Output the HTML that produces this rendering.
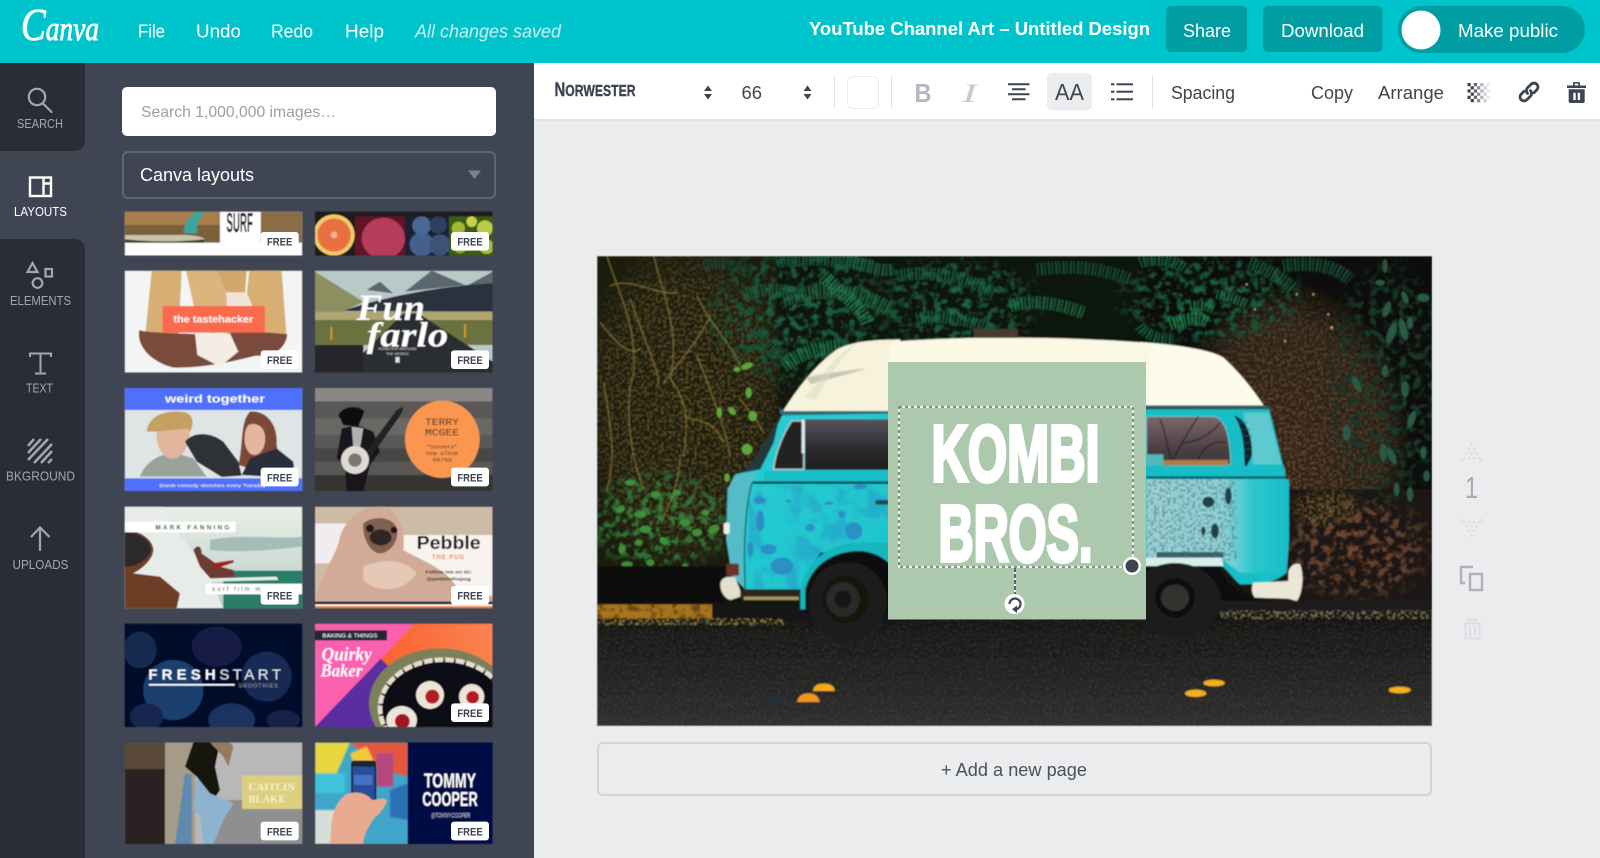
<!DOCTYPE html>
<html><head><meta charset="utf-8"><title>Canva</title>
<style>
html,body{margin:0;padding:0;width:1600px;height:858px;overflow:hidden;background:#ebecee}
svg{display:block}
text{font-family:"Liberation Sans",sans-serif}
.ser{font-family:"Liberation Serif",serif}
.mono{font-family:"Liberation Mono",monospace}
</style></head><body>
<svg width="1600" height="858" viewBox="0 0 1600 858" xmlns="http://www.w3.org/2000/svg">
<defs>
<filter id="m1" x="0" y="0" width="1" height="1" color-interpolation-filters="sRGB"><feTurbulence type="fractalNoise" baseFrequency=".014" numOctaves="4" seed="3"/><feColorMatrix type="matrix" values="0 0 0 0 0 0 0 0 0 0 0 0 0 0 0 6 0 0 0 -2.9" result="a"/><feComposite in="SourceGraphic" in2="a" operator="in"/></filter>
<filter id="m2" x="0" y="0" width="1" height="1" color-interpolation-filters="sRGB"><feTurbulence type="fractalNoise" baseFrequency=".045" numOctaves="3" seed="8"/><feColorMatrix type="matrix" values="0 0 0 0 0 0 0 0 0 0 0 0 0 0 0 5 0 0 0 -2.4" result="a"/><feComposite in="SourceGraphic" in2="a" operator="in"/></filter>
<filter id="m3" x="0" y="0" width="1" height="1" color-interpolation-filters="sRGB"><feTurbulence type="fractalNoise" baseFrequency=".5" numOctaves="2" seed="5"/><feColorMatrix type="matrix" values="0 0 0 0 0 0 0 0 0 0 0 0 0 0 0 6 0 0 0 -3.4" result="a"/><feComposite in="SourceGraphic" in2="a" operator="in"/></filter>
<filter id="m4" x="0" y="0" width="1" height="1" color-interpolation-filters="sRGB"><feTurbulence type="fractalNoise" baseFrequency=".12" numOctaves="2" seed="11"/><feColorMatrix type="matrix" values="0 0 0 0 0 0 0 0 0 0 0 0 0 0 0 7 0 0 0 -3.4" result="a"/><feComposite in="SourceGraphic" in2="a" operator="in"/></filter>
<filter id="b1"><feGaussianBlur stdDeviation="2.5"/></filter>
<filter id="b3"><feGaussianBlur stdDeviation="1.3"/></filter>
<filter id="bp" x="0" y="0" width="1" height="1"><feGaussianBlur stdDeviation=".7"/></filter>
<linearGradient id="sky" x1="0" y1="0" x2="0" y2="1"><stop offset="0" stop-color="#e8eee6"/><stop offset="1" stop-color="#b8cfc6"/></linearGradient>
<linearGradient id="oran" x1="0" y1="0" x2="1" y2="0"><stop offset="0" stop-color="#f9602e"/><stop offset="1" stop-color="#fb8250"/></linearGradient>
<linearGradient id="road" x1="0" y1="0" x2="0" y2="1"><stop offset="0" stop-color="#171716"/><stop offset=".35" stop-color="#1f1f1e"/><stop offset="1" stop-color="#302f2e"/></linearGradient>
<linearGradient id="palebody" x1="0" y1="0" x2="1" y2="0"><stop offset="0" stop-color="#9fd3d6"/><stop offset=".55" stop-color="#8fd2d6"/><stop offset=".75" stop-color="#2cc6cd"/><stop offset="1" stop-color="#16bec7"/></linearGradient>
<linearGradient id="leftbody" x1="0" y1="0" x2="1" y2="1"><stop offset="0" stop-color="#2accd2"/><stop offset="1" stop-color="#1cc4cc"/></linearGradient>
<linearGradient id="winL" x1="0" y1="0" x2="0" y2="1"><stop offset="0" stop-color="#55535a"/><stop offset=".6" stop-color="#2b2a2c"/><stop offset="1" stop-color="#1f1f20"/></linearGradient>
<linearGradient id="winR" x1="0" y1="0" x2="0" y2="1"><stop offset="0" stop-color="#7a6668"/><stop offset=".7" stop-color="#4a3e42"/><stop offset="1" stop-color="#3c3a3c"/></linearGradient>
<radialGradient id="gOl"><stop offset="0" stop-color="#93793a"/><stop offset=".7" stop-color="#7d6932"/><stop offset="1" stop-color="#7d6932" stop-opacity="0"/></radialGradient>
<radialGradient id="gGr"><stop offset="0" stop-color="#1c6442"/><stop offset=".7" stop-color="#175437"/><stop offset="1" stop-color="#175437" stop-opacity="0"/></radialGradient>
<radialGradient id="gLg"><stop offset="0" stop-color="#37803a"/><stop offset=".7" stop-color="#2e6e34"/><stop offset="1" stop-color="#2e6e34" stop-opacity="0"/></radialGradient>
<radialGradient id="gBr"><stop offset="0" stop-color="#6e4d35"/><stop offset=".75" stop-color="#59402c"/><stop offset="1" stop-color="#59402c" stop-opacity="0"/></radialGradient>
<radialGradient id="gDk"><stop offset="0" stop-color="#1c3f2e"/><stop offset=".7" stop-color="#173726"/><stop offset="1" stop-color="#173726" stop-opacity="0"/></radialGradient>
<radialGradient id="gRk"><stop offset="0" stop-color="#7a4a30"/><stop offset=".7" stop-color="#5e4030"/><stop offset="1" stop-color="#5e4030" stop-opacity="0"/></radialGradient>
<clipPath id="cv"><rect x="597" y="256" width="835" height="470"/></clipPath>
<clipPath id="t0l"><rect x="44" y="20" width="533" height="132"/></clipPath>
<clipPath id="t0r"><rect x="615" y="20" width="533" height="132"/></clipPath>
<clipPath id="t1l"><rect x="44" y="197" width="533" height="306"/></clipPath>
<clipPath id="t1r"><rect x="615" y="197" width="533" height="306"/></clipPath>
<clipPath id="t2l"><rect x="44" y="549" width="533" height="309"/></clipPath>
<clipPath id="t2r"><rect x="615" y="549" width="533" height="309"/></clipPath>
<clipPath id="t3l"><rect x="44" y="20" width="533" height="305"/></clipPath>
<clipPath id="t3r"><rect x="615" y="20" width="533" height="305"/></clipPath>
<clipPath id="t4l"><rect x="44" y="371" width="533" height="310"/></clipPath>
<clipPath id="t4r"><rect x="615" y="371" width="533" height="310"/></clipPath>
<clipPath id="t5l"><rect x="44" y="727" width="533" height="305"/></clipPath>
<clipPath id="t5r"><rect x="615" y="727" width="533" height="305"/></clipPath>
</defs>

<!-- page -->
<rect width="1600" height="858" fill="#ebecee"/>
<rect x="0" y="63" width="534" height="795" fill="#3f4552"/>
<path d="M0 63H85V141a10 10 0 0 1-10 10H0Z" fill="#292e36"/>
<path d="M0 239H75a10 10 0 0 1 10 10V858H0Z" fill="#292e36"/>

<!-- top bar -->
<rect width="1600" height="63" fill="#00c4cc"/>
<text class="ser" x="21" y="40" font-size="34" font-style="italic" fill="#fff" stroke="#fff" stroke-width=".9" textLength="78" lengthAdjust="spacingAndGlyphs"><tspan font-size="46">C</tspan>anva</text>
<g fill="#fff" font-size="18.5">
<text x="138" y="37.500" textLength="27" lengthAdjust="spacingAndGlyphs">File</text>
<text x="196" y="37.500" textLength="45" lengthAdjust="spacingAndGlyphs">Undo</text>
<text x="271" y="37.500" textLength="42" lengthAdjust="spacingAndGlyphs">Redo</text>
<text x="345" y="37.500" textLength="39" lengthAdjust="spacingAndGlyphs">Help</text>
</g>
<text x="415" y="37.500" font-size="18.500" font-style="italic" fill="#c4f0f2" textLength="146" lengthAdjust="spacingAndGlyphs">All changes saved</text>
<text x="809" y="35" font-size="18.500" font-weight="700" fill="#fff" textLength="341" lengthAdjust="spacingAndGlyphs">YouTube Channel Art – Untitled Design</text>
<rect x="1166" y="6" width="81" height="46" rx="5" fill="#009da3"/>
<rect x="1263" y="6" width="119.500" height="46" rx="5" fill="#009da3"/>
<rect x="1398" y="6" width="187" height="47" rx="23.500" fill="#009da3"/>
<circle cx="1421" cy="30" r="19.500" fill="#fff"/>
<g fill="#fff" font-size="18.500">
<text x="1183" y="37" textLength="48" lengthAdjust="spacingAndGlyphs">Share</text>
<text x="1281" y="37" textLength="83" lengthAdjust="spacingAndGlyphs">Download</text>
<text x="1458" y="37" textLength="100" lengthAdjust="spacingAndGlyphs">Make public</text>
</g>

<!-- toolbar -->
<rect x="534" y="63" width="1066" height="57" fill="#fff"/>
<rect x="534" y="119" width="1066" height="2" fill="#e1e3e6"/>
<text x="554.500" y="96" font-size="19" font-weight="700" fill="#3e4451" stroke="#3e4451" stroke-width=".4" textLength="81" lengthAdjust="spacingAndGlyphs">N<tspan font-size="15.500">ORWESTER</tspan></text>
<g fill="#3e4451"><path d="M708 85.500l4 5.500h-8zM708 99.500l4-5.500h-8zM807.500 85.500l4 5.500h-8zM807.500 99.500l4-5.500h-8z"/></g>
<text x="741.500" y="99" font-size="18" fill="#3e4451" textLength="20.500" lengthAdjust="spacingAndGlyphs">66</text>
<g fill="#dfe1e4"><rect x="834" y="76" width="1" height="33"/><rect x="891" y="76" width="1" height="33"/><rect x="1152" y="76" width="1" height="33"/></g>
<rect x="847.500" y="76.500" width="31" height="32" rx="5" fill="#fff" stroke="#eceded"/>
<text x="914.500" y="102" font-size="26" font-weight="700" fill="#b4b8be" textLength="17" lengthAdjust="spacingAndGlyphs">B</text>
<text class="ser" x="962" y="102" font-size="26" font-style="italic" fill="#c6c9cd" textLength="15" lengthAdjust="spacingAndGlyphs">I</text>
<g stroke="#3e4451" stroke-width="2"><path d="M1008 84.300h21.500M1012 89.300h13.500M1008 94.300h21.500M1012 99.300h13.500" fill="none"/></g>
<rect x="1047" y="73" width="45" height="37.500" rx="5" fill="#ecedef"/>
<text x="1055" y="100" font-size="23.500" fill="#3e4451" textLength="29" lengthAdjust="spacingAndGlyphs">AA</text>
<g fill="#3e4451"><rect x="1111" y="83.300" width="3.500" height="2"/><rect x="1111" y="90.700" width="3.500" height="2"/><rect x="1111" y="98.300" width="3.500" height="2"/><rect x="1116.500" y="83.300" width="16.500" height="2"/><rect x="1116.500" y="90.700" width="16.500" height="2"/><rect x="1116.500" y="98.300" width="16.500" height="2"/></g>
<g font-size="18" fill="#3e4451">
<text x="1171" y="99" textLength="64" lengthAdjust="spacingAndGlyphs">Spacing</text>
<text x="1311" y="99" textLength="42" lengthAdjust="spacingAndGlyphs">Copy</text>
<text x="1378" y="99" textLength="66" lengthAdjust="spacingAndGlyphs">Arrange</text>
</g>
<!-- transparency -->
<g fill="#3e4451">
<path d="M1467.500 83h3.200v3.200h-3.200zM1467.500 89.400h3.200v3.200h-3.200zM1467.500 95.800h3.200v3.200h-3.200z"/>
<path d="M1470.700 86.200h3.200v3.200h-3.200zM1470.700 92.600h3.200v3.200h-3.200zM1470.700 99h3.200v3.200h-3.200z"/>
<path opacity=".8" d="M1473.900 83h3.200v3.200h-3.200zM1473.900 89.400h3.200v3.200h-3.200zM1473.900 95.800h3.200v3.200h-3.200z"/>
<path opacity=".6" d="M1477.100 86.200h3.200v3.200h-3.200zM1477.100 92.600h3.200v3.200h-3.200zM1477.100 99h3.200v3.200h-3.200z"/>
<path opacity=".4" d="M1480.300 83h3.200v3.200h-3.200zM1480.300 89.400h3.200v3.200h-3.200zM1480.300 95.800h3.200v3.200h-3.200z"/>
<path opacity=".25" d="M1483.500 86.200h3.200v3.200h-3.200zM1483.500 92.600h3.200v3.200h-3.200zM1483.500 99h3.200v3.200h-3.200z"/>
<path opacity=".12" d="M1486.700 83h3.200v3.200h-3.200zM1486.700 89.400h3.200v3.200h-3.200zM1486.700 95.800h3.200v3.200h-3.200z"/>
</g>
<!-- link -->
<g transform="rotate(-45 1529 92)" fill="none" stroke="#3e4451" stroke-width="2.800" stroke-linecap="round"><path d="M1526 88h-4a4 4 0 0 0 0 8h5a4 4 0 0 0 4-4"/><path d="M1532 96h4a4 4 0 0 0 0-8h-5a4 4 0 0 0-4 4"/></g>
<!-- trash -->
<g fill="#3e4451"><path d="M1573 83.500a1.500 1.500 0 0 1 1.500-1.500h4a1.500 1.500 0 0 1 1.500 1.500V85.500h6v2.500h-19v-2.500h6Zm1.800 0v2h3.400v-2Z" fill-rule="evenodd"/><path d="M1568.700 89.300h16v12a1.700 1.700 0 0 1-1.700 1.700h-12.600a1.700 1.700 0 0 1-1.700-1.700Zm4.600 3.400v7.300h2.400v-7.300Zm4.400 0v7.300h2.400v-7.300Z" fill-rule="evenodd"/></g>

<!-- nav icons -->
<g fill="none" stroke="#a3a7ad" stroke-width="2.200">
<circle cx="37" cy="97" r="8.200"/><path d="M43 103.500l8.500 8.500" stroke-linecap="round"/>
<path d="M32.500 263l5 9h-10z"/><rect x="45.500" y="269" width="6.500" height="7.500"/><circle cx="37.500" cy="283" r="4.800"/>
<path d="M40 551V528M31 537l9-9.500 9.500 9.500"/>
<path d="M30 357V353.500H51V357M40.500 353.500V373.500M35 373.500H46" stroke-width="2"/>
</g>
<rect x="30" y="177.500" width="21" height="18.500" fill="none" stroke="#fff" stroke-width="2.400"/><path d="M43.500 177v19M44 183.500h7" fill="none" stroke="#fff" stroke-width="2.400"/>
<g stroke="#a3a7ad" stroke-width="2.600" fill="none"><path d="M28 446l6-7M28 453l13-14M28 460l20-21M34 463l18-19M41 463l11-12M48 463l4-4"/></g>
<g font-size="13" fill="#a3a7ad">
<text x="17" y="128" textLength="46" lengthAdjust="spacingAndGlyphs">SEARCH</text>
<text x="10" y="305" textLength="61" lengthAdjust="spacingAndGlyphs">ELEMENTS</text>
<text x="26" y="392.500" textLength="27" lengthAdjust="spacingAndGlyphs">TEXT</text>
<text x="6" y="480.500" textLength="69" lengthAdjust="spacingAndGlyphs">BKGROUND</text>
<text x="12.500" y="569" textLength="56" lengthAdjust="spacingAndGlyphs">UPLOADS</text>
</g>
<text x="14" y="216" font-size="13" fill="#fff" textLength="53" lengthAdjust="spacingAndGlyphs">LAYOUTS</text>

<!-- search + dropdown -->
<rect x="122" y="87" width="374" height="49" rx="5" fill="#fff"/>
<text x="141" y="117" font-size="16" fill="#9a9fa7" textLength="195" lengthAdjust="spacingAndGlyphs">Search 1,000,000 images…</text>
<rect x="123" y="152" width="372" height="46" rx="5" fill="#3f4552" stroke="#5f6673" stroke-width="2"/>
<text x="140" y="181" font-size="18" fill="#fff" textLength="114" lengthAdjust="spacingAndGlyphs">Canva layouts</text>
<path d="M468 170.500h13l-6.500 8.500z" fill="#7b818c"/>

<!-- THUMBNAILS (upper) -->
<g transform="translate(110 205) scale(.33333)">
 <g filter="url(#b3)">
 <g clip-path="url(#t0l)">
  <rect x="44" y="20" width="533" height="132" fill="#fff"/>
  <rect x="44" y="20" width="286" height="93" fill="#7a5e3b"/>
  <rect x="44" y="20" width="286" height="40" fill="#a77d4c"/>
  <rect x="452" y="20" width="125" height="93" fill="#8a6c47"/>
  <path d="M220 85C225 50 240 30 262 20h24C265 40 258 60 262 85Z" fill="#3aa59c"/>
  <path d="M44 90H230C270 92 285 100 284 103 200 115 120 113 44 110Z" fill="#c9c3a8"/>
  <path d="M44 103C120 110 200 112 284 103L280 113H44Z" fill="#3a3a30"/>
  <rect x="330" y="20" width="122" height="93" fill="#fff"/>
  <text x="349" y="81" font-size="82" font-weight="700" fill="#222" textLength="80" lengthAdjust="spacingAndGlyphs">SURF</text>
 </g>
 <g clip-path="url(#t0r)">
  <rect x="615" y="20" width="533" height="132" fill="#1b1a1c"/>
  <circle cx="672" cy="90" r="62" fill="#f0c96a"/><circle cx="672" cy="90" r="50" fill="#ea7040"/><circle cx="672" cy="90" r="10" fill="#f3b48f"/>
  <rect x="735" y="34" width="150" height="118" fill="#5e1325"/>
  <ellipse cx="820" cy="100" rx="65" ry="62" fill="#b73a5a"/>
  <rect x="885" y="34" width="132" height="118" fill="#1b2230"/>
  <circle cx="935" cy="118" r="36" fill="#45618f"/><circle cx="935" cy="62" r="28" fill="#4a6896"/><circle cx="985" cy="60" r="26" fill="#2e3f60"/><circle cx="990" cy="120" r="32" fill="#3a5278"/>
  <rect x="1017" y="34" width="131" height="118" fill="#3c5a14"/>
  <circle cx="1045" cy="70" r="20" fill="#9dbb33"/><circle cx="1085" cy="50" r="16" fill="#c5d14c"/><circle cx="1125" cy="70" r="24" fill="#b8cc44"/><circle cx="1050" cy="125" r="20" fill="#8aa72a"/><circle cx="1130" cy="125" r="22" fill="#a7bf36"/>
 </g>

 <g clip-path="url(#t1l)">
  <rect x="44" y="197" width="533" height="306" fill="#f3f5f4"/>
  <path d="M125 197H215L205 400H105Z" fill="#d8ae72"/>
  <path d="M228 197H335L355 300 310 390 255 320Z" fill="#dcb57e"/>
  <path d="M322 197H410L405 270 350 265Z" fill="#d2a76c"/>
  <path d="M418 197H515L530 400H395L410 270Z" fill="#d8ae72"/>
  <path d="M350 262L410 262 430 310 350 310Z" fill="#f0e4d8"/>
  <path d="M88 375C110 385 250 385 300 390 400 375 480 382 532 388 525 440 480 455 440 452 400 460 300 490 190 488 120 470 78 420 88 375Z" fill="#7a4c3e"/>
  <path d="M255 385L360 385 385 440 330 485 262 450Z" fill="#f3ede6"/>
  <rect x="158" y="303" width="307" height="80" fill="#fb6a4e"/>
  <text x="190" y="353" font-size="29" font-weight="700" fill="#fff" textLength="240" lengthAdjust="spacingAndGlyphs">the tastehacker</text>
 </g>
 <g clip-path="url(#t1r)">
  <rect x="615" y="197" width="533" height="306" fill="#b8c9c8"/>
  <path d="M615 200L760 290 700 320H615Z" fill="#8d8f60"/>
  <path d="M770 255L810 230 850 265ZM885 260L965 197 1065 240ZM1075 240L1148 200V240Z" fill="#5c6670"/>
  <path d="M700 318C800 280 1000 240 1148 235V320Z" fill="#2a333c"/>
  <rect x="615" y="320" width="533" height="100" fill="#6a7240"/>
  <path d="M615 320H1148V345H615Z" fill="#b1a473"/>
  <path d="M700 503L880 325H925L1148 470V503Z" fill="#2b2e33"/>
  <rect x="615" y="420" width="145" height="83" fill="#25282c"/>
  <rect x="661" y="365" width="6" height="40" fill="#d09a20"/><rect x="1062" y="358" width="6" height="40" fill="#d09a20"/>
  <text class="ser" x="740" y="345" font-size="110" font-style="italic" font-weight="700" fill="#fff" textLength="205" lengthAdjust="spacingAndGlyphs">Fun</text>
  <text class="ser" x="770" y="425" font-size="105" font-style="italic" font-weight="700" fill="#fff" textLength="245" lengthAdjust="spacingAndGlyphs">farlo</text>
  <text x="805" y="435" font-size="10" fill="#ddd" textLength="115" lengthAdjust="spacingAndGlyphs">ROADTRIP AROUND</text>
  <text x="828" y="450" font-size="10" fill="#ddd" textLength="68" lengthAdjust="spacingAndGlyphs">THE WORLD</text>
  <rect x="856" y="456" width="13" height="17" fill="#ddd"/>
 </g>

 <g clip-path="url(#t2l)">
  <rect x="44" y="549" width="533" height="309" fill="#dfe5e4"/>
  <rect x="44" y="549" width="533" height="66" fill="#4f6ffb"/>
  <rect x="44" y="820" width="533" height="38" fill="#4f6ffb"/>
  <text x="165" y="593" font-size="32" fill="#fff" font-weight="700" textLength="300" lengthAdjust="spacingAndGlyphs">weird together</text>
  <path d="M90 815C110 760 160 750 185 740L250 760 290 815Z" fill="#99a39b"/>
  <path d="M110 680C115 640 150 615 215 620 250 625 255 650 240 680Z" fill="#c4a062"/>
  <path d="M140 680C135 720 160 770 195 760 230 750 245 700 235 670Z" fill="#e0b69c"/>
  <path d="M420 620C470 615 505 660 500 720 510 760 480 800 450 800L385 780C400 720 390 650 420 620Z" fill="#7c4a39"/>
  <path d="M415 660C440 650 470 665 465 710 460 750 430 760 415 740 400 720 400 680 415 660Z" fill="#e6b5a0"/>
  <path d="M395 810L420 760 500 730 550 770 555 820Z" fill="#2a2f3a"/>
  <path d="M225 710C250 680 300 680 340 710L385 770 395 812 335 816 260 770Z" fill="#2f3136"/>
  <text x="148" y="846" font-size="15" fill="#fff" textLength="320" lengthAdjust="spacingAndGlyphs">Dumb comedy sketches every Tuesday</text>
 </g>
 <g clip-path="url(#t2r)">
  <rect x="615" y="549" width="533" height="309" fill="#5a5856"/>
  <rect x="615" y="549" width="533" height="40" fill="#8a8784"/>
  <rect x="615" y="640" width="533" height="50" fill="#6b6865"/>
  <rect x="615" y="730" width="533" height="40" fill="#4a4745"/>
  <rect x="615" y="810" width="533" height="48" fill="#363432"/>
  <path d="M685 630C700 600 750 600 763 620L745 665 700 660Z" fill="#111"/>
  <path d="M680 760L695 670 740 660 790 680 810 740 780 780 760 858H710L705 780Z" fill="#16161a"/>
  <path d="M725 665L760 670 750 730H730Z" fill="#b0b0b0"/>
  <path d="M760 750L860 615 880 605 875 625 780 760Z" fill="#222"/>
  <circle cx="735" cy="765" r="42" fill="#dedad2"/><circle cx="735" cy="765" r="20" fill="#777"/>
  <ellipse cx="997" cy="703" rx="112" ry="116" fill="#fa9650"/>
  <g fill="#3a2e24"><text class="mono" x="945" y="660" font-size="31" textLength="102" lengthAdjust="spacingAndGlyphs">TERRY</text><text class="mono" x="945" y="692" font-size="31" textLength="102" lengthAdjust="spacingAndGlyphs">MCGEE</text><text class="mono" x="950" y="730" font-size="16" textLength="92" lengthAdjust="spacingAndGlyphs">"Sunsets"</text><text class="mono" x="948" y="750" font-size="16" textLength="96" lengthAdjust="spacingAndGlyphs">new album</text><text class="mono" x="968" y="770" font-size="16" textLength="58" lengthAdjust="spacingAndGlyphs">08/08</text></g>
 </g>
 </g>
 <!-- FREE badges -->
 <g fill="#fff"><rect x="452" y="81" width="114" height="56" rx="9"/><rect x="1023" y="81" width="114" height="56" rx="9"/><rect x="452" y="436" width="114" height="56" rx="9"/><rect x="1023" y="436" width="114" height="56" rx="9"/><rect x="452" y="788" width="114" height="56" rx="9"/><rect x="1023" y="788" width="114" height="56" rx="9"/></g>
 <g font-size="34" font-weight="700" fill="#3e4451">
  <text x="471" y="122" textLength="76" lengthAdjust="spacingAndGlyphs">FREE</text><text x="1042" y="122" textLength="76" lengthAdjust="spacingAndGlyphs">FREE</text>
  <text x="471" y="477" textLength="76" lengthAdjust="spacingAndGlyphs">FREE</text><text x="1042" y="477" textLength="76" lengthAdjust="spacingAndGlyphs">FREE</text>
  <text x="471" y="829" textLength="76" lengthAdjust="spacingAndGlyphs">FREE</text><text x="1042" y="829" textLength="76" lengthAdjust="spacingAndGlyphs">FREE</text>
 </g>
</g>

<!-- THUMBNAILS (lower) -->
<g transform="translate(110 500) scale(.33333)">
 <g filter="url(#b3)">
 <g clip-path="url(#t3l)">
  <rect x="44" y="20" width="533" height="305" fill="url(#sky)"/>
  <path d="M300 120C400 100 500 120 577 110V140C480 150 400 160 300 150Z" fill="#a5bdb6"/>
  <rect x="340" y="212" width="237" height="113" fill="#2a7c68"/>
  <path d="M44 20H160L190 80 230 130 290 210 340 325H44Z" fill="#e8ece9"/>
  <path d="M44 90C90 90 130 120 130 150 130 180 90 210 70 220L150 230 210 280 200 325H44Z" fill="#6d3c26"/>
  <path d="M44 95C100 100 130 130 120 160 100 190 70 200 44 200Z" fill="#2c2a2a"/>
  <path d="M250 150C265 130 275 140 275 160L330 200 370 210 375 230 305 240 270 200Z" fill="#6d3a33"/>
  <path d="M305 190L372 180 370 188 320 205Z" fill="#a81e22"/>
  <path d="M300 235L500 230 505 240 300 245Z" fill="#e8ece9"/>
  <rect x="44" y="65" width="333" height="32" fill="#fff"/>
  <text x="136" y="88" font-size="19" font-weight="700" letter-spacing="4" fill="#333" textLength="226" lengthAdjust="spacing">MARK FANNING</text>
  <rect x="287" y="251" width="290" height="32" fill="#fff"/>
  <text x="306" y="273" font-size="19" fill="#333" textLength="146" lengthAdjust="spacing">surf film m</text>
 </g>
 <g clip-path="url(#t3r)">
  <rect x="615" y="20" width="533" height="305" fill="#cdbba6"/>
  <rect x="615" y="70" width="150" height="120" fill="#f0ecf0"/>
  <rect x="880" y="105" width="268" height="200" fill="#f8f3ee"/>
  <path d="M615 305C640 200 680 170 690 110 710 50 760 15 830 20 880 50 885 110 880 150 930 180 1000 200 1040 260L1148 290V305Z" fill="#d1ab97"/>
  <path d="M760 70C790 45 850 50 860 85 870 120 840 160 810 160 780 160 755 110 760 70Z" fill="#80614f"/>
  <ellipse cx="812" cy="112" rx="33" ry="24" fill="#2f2826"/>
  <circle cx="780" cy="85" r="12" fill="#1a1818"/><circle cx="852" cy="90" r="10" fill="#1a1818"/>
  <path d="M760 200C800 180 880 170 920 220 880 280 800 280 760 240Z" fill="#e5c8b6"/>
  <rect x="615" y="305" width="533" height="8" fill="#222"/><rect x="615" y="313" width="533" height="5" fill="#fff"/><rect x="615" y="318" width="533" height="7" fill="#ee7a2a"/>
  <text x="920" y="147" font-size="56" font-weight="700" fill="#1d1d1d" textLength="192" lengthAdjust="spacingAndGlyphs">Pebble</text>
  <text x="966" y="177" font-size="18" font-weight="700" fill="#ee7a2a" textLength="96" lengthAdjust="spacing">THE PUG</text>
  <text x="946" y="221" font-size="13" font-weight="700" fill="#222" textLength="140" lengthAdjust="spacingAndGlyphs">Follow me on IG:</text>
  <text x="950" y="241" font-size="13" font-weight="700" fill="#222" textLength="132" lengthAdjust="spacingAndGlyphs">@pebblethepug</text>
 </g>
 <g clip-path="url(#t4l)">
  <rect x="44" y="371" width="533" height="310" fill="#06082a"/>
  <ellipse cx="190" cy="570" rx="90" ry="90" fill="#1e3f6e"/><ellipse cx="90" cy="450" rx="50" ry="55" fill="#14294f"/><ellipse cx="320" cy="440" rx="75" ry="60" fill="#141d44"/><ellipse cx="470" cy="530" rx="75" ry="75" fill="#182a52"/><ellipse cx="365" cy="660" rx="70" ry="50" fill="#1c3360"/><ellipse cx="520" cy="660" rx="50" ry="30" fill="#152447"/><ellipse cx="110" cy="650" rx="50" ry="40" fill="#14264d"/>
  <text x="115" y="538" font-size="45" font-weight="700" fill="#fff" textLength="202" lengthAdjust="spacing">FRESH</text>
  <text x="328" y="538" font-size="45" fill="#e6e9ef" textLength="185" lengthAdjust="spacing">START</text>
  <rect x="117" y="552" width="257" height="5" fill="#fff"/>
  <text x="385" y="562" font-size="16" fill="#99a" textLength="118" lengthAdjust="spacing">SMOOTHIES</text>
 </g>
 <g clip-path="url(#t4r)">
  <rect x="615" y="371" width="533" height="310" fill="#fa60ae"/>
  <path d="M912 371H1148V681H780L810 480Z" fill="url(#oran)"/>
  <path d="M615 681L812 476 842 505 800 681Z" fill="#5a2ea0"/>
  <ellipse cx="990" cy="610" rx="213" ry="165" fill="#7c8058"/>
  <ellipse cx="1000" cy="625" rx="190" ry="146" fill="#0e1013" stroke="#e6ddd0" stroke-width="14" stroke-dasharray="26 6"/>
  <circle cx="960" cy="585" r="42" fill="#efe3d8"/><circle cx="1085" cy="590" r="38" fill="#efe3d8"/><ellipse cx="875" cy="660" rx="46" ry="42" fill="#efe3d8"/>
  <circle cx="967" cy="590" r="21" fill="#b01a24"/><circle cx="1088" cy="592" r="19" fill="#b01a24"/><circle cx="877" cy="664" r="22" fill="#a01520"/>
  <rect x="615" y="391" width="216" height="30" fill="#272733"/>
  <text x="637" y="413" font-size="17" fill="#fff" textLength="165" lengthAdjust="spacingAndGlyphs">BAKING &amp; THINGS</text>
  <text class="ser" x="635" y="482" font-size="58" font-style="italic" font-weight="700" fill="#fff" textLength="150" lengthAdjust="spacingAndGlyphs">Quirky</text>
  <text class="ser" x="632" y="530" font-size="54" font-style="italic" font-weight="700" fill="#fff" textLength="125" lengthAdjust="spacingAndGlyphs">Baker</text>
 </g>
 <g clip-path="url(#t5l)">
  <rect x="44" y="727" width="533" height="305" fill="#b9b8b9"/>
  <rect x="44" y="727" width="130" height="305" fill="#2c2320"/>
  <rect x="44" y="727" width="125" height="80" fill="#5a4a38"/>
  <rect x="165" y="727" width="90" height="305" fill="#a69b88"/>
  <rect x="290" y="900" width="287" height="132" fill="#8f8f90"/>
  <path d="M225 800L250 727H330L315 800 330 870 310 900 260 830Z" fill="#17130f"/>
  <path d="M300 727C330 730 365 720 370 740L355 800 340 770Z" fill="#967a5e"/>
  <path d="M225 820L245 825 245 1032H195Z" fill="#5f89ad"/>
  <path d="M260 830L300 880 370 910 340 960 310 1032H280L270 950 250 930Z" fill="#8db4cf"/>
  <rect x="396" y="826" width="181" height="101" fill="#dccf80"/>
  <text class="ser" x="415" y="872" font-size="31" font-weight="700" fill="#f7f1c8" textLength="140" lengthAdjust="spacingAndGlyphs">CAITLIN</text>
  <text class="ser" x="416" y="907" font-size="31" font-weight="700" fill="#f7f1c8" textLength="110" lengthAdjust="spacingAndGlyphs">BLAKE</text>
 </g>
 <g clip-path="url(#t5r)">
  <rect x="615" y="727" width="278" height="305" fill="#3fa6c9"/>
  <g filter="url(#b1)"><path d="M615 727H720L680 820H615Z" fill="#e7d640"/><path d="M720 727H893V830L820 810Z" fill="#e4563f"/><path d="M720 760L770 740 800 800 740 820Z" fill="#f2c73c"/><rect x="800" y="760" width="50" height="100" fill="#b54a7e"/><rect x="615" y="820" width="90" height="60" fill="#41c3d8"/><path d="M840 870L893 850V960L840 950Z" fill="#2d70b5"/><rect x="615" y="930" width="60" height="102" fill="#d5ded8"/></g>
  <rect x="723" y="782" width="76" height="165" rx="9" fill="#1c2633"/>
  <rect x="728" y="800" width="66" height="118" fill="#2b4e9b"/><rect x="732" y="825" width="56" height="30" fill="#4472c4"/>
  <path d="M660 1032C665 980 660 930 700 890 720 870 770 875 785 900 800 900 830 890 830 905 820 930 800 950 795 950 780 975 760 1000 760 1032Z" fill="#e9ab90"/>
  <rect x="893" y="727" width="255" height="305" fill="#060845"/>
  <text x="942" y="862" font-size="62" font-weight="700" fill="#fff" textLength="156" lengthAdjust="spacingAndGlyphs">TOMMY</text>
  <text x="937" y="918" font-size="62" font-weight="700" fill="#fff" textLength="166" lengthAdjust="spacingAndGlyphs">COOPER</text>
  <text x="963" y="952" font-size="18" fill="#ccd" textLength="118" lengthAdjust="spacingAndGlyphs">@TOMMYCOOPER</text>
 </g>
 </g>
 <g fill="#fff"><rect x="452" y="258" width="114" height="56" rx="9"/><rect x="1023" y="258" width="114" height="56" rx="9"/><rect x="1023" y="610" width="114" height="56" rx="9"/><rect x="452" y="965" width="114" height="56" rx="9"/><rect x="1023" y="965" width="114" height="56" rx="9"/></g>
 <g font-size="34" font-weight="700" fill="#3e4451">
  <text x="471" y="299" textLength="76" lengthAdjust="spacingAndGlyphs">FREE</text><text x="1042" y="299" textLength="76" lengthAdjust="spacingAndGlyphs">FREE</text>
  <text x="1042" y="651" textLength="76" lengthAdjust="spacingAndGlyphs">FREE</text>
  <text x="471" y="1006" textLength="76" lengthAdjust="spacingAndGlyphs">FREE</text><text x="1042" y="1006" textLength="76" lengthAdjust="spacingAndGlyphs">FREE</text>
 </g>
</g>

<!-- CANVAS PHOTO -->
<g clip-path="url(#cv)">
<g filter="url(#bp)">
 <rect x="597" y="256" width="835" height="470" fill="#11140e"/>
 <rect x="597" y="620" width="835" height="106" fill="url(#road)"/>
 <rect x="597" y="620" width="835" height="106" fill="#7a766c" filter="url(#m3)" opacity=".3"/>

 <!-- middle top foliage -->
 <g transform="translate(897 256) scale(.33333)">
  <rect x="-100" y="-20" width="560" height="330" fill="url(#gGr)" filter="url(#m2)"/>
  <g fill="none" stroke-dasharray="4 7 6 5" stroke-width="38" opacity=".75">
   <path d="M0 60C100 40 200 60 290 110" stroke="#1a6644"/>
   <path d="M340 150C400 130 480 140 560 170" stroke="#1f7a4e"/>
   <path d="M420 40C520 30 600 30 700 70" stroke="#1a5a3e"/>
   <path d="M60 190C130 170 220 190 300 230" stroke="#1c6a47"/>
  </g>
 </g>

 <!-- LEFT SCENE -->
 <g transform="translate(597 256) scale(.33333)">
  <rect x="0" y="0" width="540" height="940" fill="#1c1b0f"/>
  <rect x="-80" y="-80" width="680" height="1040" fill="url(#gOl)" filter="url(#m4)" opacity=".5"/>
  <rect x="-60" y="620" width="500" height="340" fill="url(#gLg)" filter="url(#m2)"/>
  <rect x="300" y="-60" width="620" height="470" fill="url(#gGr)" filter="url(#m2)"/>
  <g fill="none" stroke="#a58a42" stroke-width="3.500" stroke-linecap="round" opacity=".65">
   <path d="M30 0C60 100 120 200 110 350"/><path d="M170 0C200 120 250 230 220 370"/><path d="M300 120C350 220 400 260 430 330"/><path d="M220 370C260 420 280 470 260 600"/><path d="M100 130C160 300 200 380 180 390"/><path d="M20 380C40 500 60 600 30 700"/><path d="M300 300C340 400 380 500 400 600"/><path d="M250 600C240 700 220 740 200 780"/><path d="M430 430C470 480 490 510 500 530"/><path d="M110 350C80 450 100 600 140 700"/><path d="M40 90C100 60 180 120 240 110"/><path d="M340 180C300 260 260 300 200 380"/><path d="M10 200C60 260 90 300 130 280"/><path d="M260 480C300 500 340 480 380 560"/>
  </g>
  <g fill="none" stroke-dasharray="4 7 6 5" opacity=".8">
   <path d="M560 130C650 100 760 90 880 160" stroke="#1f7048" stroke-width="44"/>
   <path d="M680 60C720 100 790 150 810 200" stroke="#268055" stroke-width="40"/>
   <path d="M560 330C620 280 700 270 735 270" stroke="#1f8050" stroke-width="42"/>
   <path d="M440 120C500 90 570 100 620 120" stroke="#1a6043" stroke-width="38"/>
   <path d="M320 30C380 10 440 40 470 50" stroke="#164f38" stroke-width="34"/>
   <path d="M540 20C600 0 700 10 830 30" stroke="#1a6043" stroke-width="38"/>
   <path d="M740 5C800 30 860 50 890 40" stroke="#1f7048" stroke-width="36"/>
   <path d="M470 220C500 260 540 290 570 310" stroke="#17573c" stroke-width="36"/>
  </g>
  <g fill="#3f8f3a">
   <ellipse cx="70" cy="760" rx="15" ry="10" transform="rotate(-30 70 760)"/><ellipse cx="130" cy="775" rx="18" ry="11"/><ellipse cx="145" cy="820" rx="17" ry="11"/><ellipse cx="200" cy="855" rx="14" ry="10" transform="rotate(40 200 855)"/><ellipse cx="265" cy="800" rx="15" ry="10"/><ellipse cx="300" cy="830" rx="15" ry="11"/><ellipse cx="350" cy="820" rx="18" ry="12" transform="rotate(-30 350 820)"/><ellipse cx="240" cy="710" rx="12" ry="9"/><ellipse cx="175" cy="715" rx="14" ry="10"/><ellipse cx="75" cy="880" rx="10" ry="14"/><ellipse cx="160" cy="920" rx="12" ry="10"/><ellipse cx="265" cy="935" rx="11" ry="13"/><ellipse cx="90" cy="925" rx="17" ry="9"/><ellipse cx="125" cy="860" rx="12" ry="9"/><ellipse cx="325" cy="770" rx="12" ry="9"/><ellipse cx="100" cy="680" rx="16" ry="9"/>
   <g fill="#5ea53c"><ellipse cx="450" cy="330" rx="18" ry="9" transform="rotate(-20 450 330)"/><ellipse cx="405" cy="465" rx="14" ry="9" transform="rotate(45 405 465)"/><ellipse cx="367" cy="470" rx="8" ry="16"/><ellipse cx="455" cy="410" rx="9" ry="16"/><ellipse cx="467" cy="480" rx="13" ry="15"/><ellipse cx="390" cy="665" rx="8" ry="13"/><ellipse cx="450" cy="580" rx="16" ry="16"/><ellipse cx="420" cy="340" rx="10" ry="7"/></g>
  </g>
  <rect x="0" y="930" width="385" height="115" fill="#100f0b"/>
  <rect x="0" y="1045" width="345" height="42" fill="#a8741c"/>
  <rect x="0" y="1045" width="345" height="42" fill="#6b4a18" filter="url(#m2)"/>
  <rect x="345" y="1040" width="560" height="60" fill="#141412"/>
  <rect x="0" y="1087" width="560" height="20" fill="#8a7a3a" filter="url(#m4)"/>

  <!-- van left -->
  <path d="M558 465C600 400 650 330 720 280 770 255 830 252 910 250V470H560Z" fill="#f6f2dc"/>
  <path d="M630 365C680 350 760 345 810 335 780 350 690 370 640 385Z" fill="#b9b5a0" opacity=".7"/>
  <path d="M620 425C660 395 700 300 780 262 720 320 680 380 660 430Z" fill="#dcd9c4" opacity=".5"/>
  <path d="M548 455L560 465 910 465V480H560L548 472Z" fill="#2f6a72"/>
  <path d="M555 478L910 472V890H670L610 1000H445L405 960 388 850 392 700 415 655 480 640Z" fill="url(#leftbody)"/>
  <path d="M392 700L415 655 480 648 462 680C445 740 438 880 445 998L405 960 388 850Z" fill="#53bcc6"/>
  <rect x="455" y="690" width="425" height="310" fill="#2b85c6" filter="url(#m1)" opacity=".35"/>
  <g fill="#2f7fc4" opacity=".75">
   <ellipse cx="487" cy="733" rx="18" ry="11"/><ellipse cx="490" cy="795" rx="12" ry="30"/><ellipse cx="515" cy="880" rx="24" ry="16"/><ellipse cx="555" cy="930" rx="34" ry="26"/><ellipse cx="460" cy="880" rx="9" ry="22"/><ellipse cx="770" cy="825" rx="26" ry="26"/><ellipse cx="735" cy="775" rx="11" ry="11"/><ellipse cx="640" cy="815" rx="14" ry="12"/><ellipse cx="790" cy="692" rx="20" ry="8"/><ellipse cx="695" cy="742" rx="14" ry="5"/><ellipse cx="575" cy="735" rx="8" ry="5"/>
  </g>
  <path d="M548 482L470 610 437 650 490 640 530 560Z" fill="#28383a"/>
  <path d="M530 640C535 590 560 530 585 495H620V640Z" fill="#232223" stroke="#b9c4c0" stroke-width="4"/>
  <rect x="614" y="492" width="9" height="100" fill="#e8ece8"/>
  <rect x="624" y="490" width="260" height="152" fill="url(#winL)"/>
  <rect x="500" y="645" width="380" height="30" fill="#12bfc7"/>
  <path d="M468 676H880V684H465Z" fill="#0b5058"/>
  <path d="M465 680C445 750 438 880 445 998" fill="none" stroke="#0b5a66" stroke-width="4"/>
  <rect x="835" y="732" width="40" height="14" rx="6" fill="#1c4a50"/>
  <rect x="380" y="800" width="18" height="34" rx="6" fill="#eeeeea"/>
  <path d="M610 1000C630 910 700 860 790 860H910V1060H610Z" fill="#18b6be"/>
  <path d="M625 1000C650 915 720 885 790 885 850 890 880 920 910 960V1070H625Z" fill="#0b0b0a"/>
  <ellipse cx="752" cy="1035" rx="118" ry="116" fill="#1f1f1e"/>
  <ellipse cx="745" cy="1030" rx="70" ry="72" fill="#121211"/>
  <ellipse cx="738" cy="1030" rx="50" ry="52" fill="#2c2b2a"/>
  <ellipse cx="738" cy="1030" rx="26" ry="27" fill="#171615"/>
  <rect x="388" y="923" width="38" height="36" rx="6" fill="#6c3028"/>
  <path d="M370 985C372 960 400 960 415 965L436 1020 400 1032C380 1025 370 1005 370 985Z" fill="#e2dfcd"/>
  <path d="M430 1002H610V1030H430Z" fill="#2a251c"/><path d="M440 1022H605V1032H440Z" fill="#a5965f"/>
  <path d="M648 1305Q650 1283 680 1283 712 1283 713 1305Z" fill="#f2a91c"/><path d="M600 1338Q605 1312 634 1312 664 1312 668 1338Z" fill="#f0961a"/>
  <ellipse cx="540" cy="1330" rx="26" ry="9" fill="#1d3340"/>
 </g>

 <!-- RIGHT SCENE -->
 <g transform="translate(1140 256) scale(.33333)">
  <rect x="0" y="0" width="885" height="1040" fill="#0f0f0b"/>
  <rect x="90" y="80" width="720" height="980" fill="url(#gBr)" opacity=".35"/>
  <rect x="90" y="80" width="720" height="980" fill="url(#gBr)" filter="url(#m4)" opacity=".8"/>
  <rect x="400" y="700" width="500" height="350" fill="#1f1812"/>
  <rect x="400" y="700" width="500" height="350" fill="url(#gRk)" filter="url(#m2)"/>
  <rect x="440" y="690" width="240" height="130" fill="url(#gOl)" filter="url(#m4)" opacity=".6"/>
  <rect x="540" y="-20" width="400" height="800" fill="url(#gDk)" filter="url(#m2)"/>
  <rect x="-100" y="-30" width="620" height="310" fill="url(#gGr)" filter="url(#m2)"/>
  <g fill="none" stroke-dasharray="4 7 6 5" opacity=".8">
   <path d="M0 20C40 5 100 10 135 40" stroke="#1a6a48" stroke-width="36"/>
   <path d="M90 205C130 190 170 180 205 200" stroke="#1f8a50" stroke-width="36"/>
   <path d="M150 150C180 145 200 150 220 160" stroke="#1c7a4a" stroke-width="28"/>
   <path d="M230 115C260 120 290 130 320 145" stroke="#1f7a50" stroke-width="28"/>
   <path d="M330 20C380 40 430 70 460 100" stroke="#1a6044" stroke-width="40"/>
   <path d="M430 30C500 20 570 20 630 70" stroke="#1a5a40" stroke-width="40"/>
   <path d="M0 210C20 240 60 250 100 250" stroke="#1a6a48" stroke-width="34"/>
  </g>
  <g fill="#2c5a46">
   <ellipse cx="740" cy="160" rx="10" ry="24" transform="rotate(20 740 160)"/><ellipse cx="790" cy="220" rx="11" ry="34" transform="rotate(-15 790 220)"/><ellipse cx="755" cy="230" rx="12" ry="32" transform="rotate(20 755 230)"/><ellipse cx="810" cy="200" rx="9" ry="18"/><ellipse cx="795" cy="125" rx="8" ry="20" transform="rotate(-20 795 125)"/><ellipse cx="735" cy="345" rx="9" ry="18"/><ellipse cx="795" cy="400" rx="11" ry="24"/><ellipse cx="815" cy="490" rx="10" ry="26" transform="rotate(20 815 490)"/><ellipse cx="650" cy="385" rx="10" ry="26" transform="rotate(-25 650 385)"/><ellipse cx="620" cy="530" rx="12" ry="24"/><ellipse cx="730" cy="590" rx="10" ry="26"/><ellipse cx="755" cy="600" rx="10" ry="28" transform="rotate(-25 755 600)"/><ellipse cx="770" cy="700" rx="8" ry="20"/><ellipse cx="810" cy="715" rx="9" ry="22"/><ellipse cx="860" cy="660" rx="9" ry="16"/><ellipse cx="850" cy="590" rx="9" ry="18"/><ellipse cx="850" cy="125" rx="18" ry="12"/><ellipse cx="720" cy="80" rx="14" ry="8"/><ellipse cx="735" cy="30" rx="7" ry="20"/>
  </g>
  <g fill="#c9b376"><circle cx="320" cy="85" r="3"/><circle cx="345" cy="160" r="3"/><circle cx="435" cy="255" r="3"/><circle cx="520" cy="115" r="3"/><circle cx="575" cy="215" r="4"/><circle cx="470" cy="115" r="3"/><circle cx="565" cy="175" r="3"/></g>
  <rect x="240" y="1035" width="650" height="30" fill="#1c1c1a"/>
  <rect x="240" y="1063" width="650" height="26" fill="#7a6a58" filter="url(#m4)"/>

  <!-- van right -->
  <path d="M0 258C100 265 210 280 250 305 310 360 345 410 372 450H0Z" fill="#fdfbe9"/>
  <path d="M0 448H385L388 460H0Z" fill="#2d5a62"/>
  <path d="M0 460H388L437 660 447 850 440 950C400 985 350 985 300 985 270 960 260 930 230 925H0Z" fill="#19bfc8"/>
  <path d="M310 470H385L425 625H340Z" fill="#5ec9d0"/>
  <path d="M20 670H447L447 850 440 950 300 950 255 915 20 915Z" fill="url(#palebody)"/>
  <rect x="20" y="670" width="270" height="245" fill="#2c5a66" filter="url(#m4)" opacity=".45"/>
  <g fill="#22404a"><ellipse cx="225" cy="825" rx="12" ry="22"/><ellipse cx="265" cy="720" rx="10" ry="26"/><ellipse cx="205" cy="738" rx="18" ry="16"/><ellipse cx="190" cy="825" rx="6" ry="14"/><rect x="50" y="888" width="200" height="18" opacity=".75"/></g>
  <path d="M20 482H220C255 485 270 540 272 625H20Z" fill="url(#winR)" stroke="#7fb8bb" stroke-width="3"/>
  <g fill="none" stroke="#17120f" stroke-width="3"><path d="M100 610C130 550 150 520 175 480"/><path d="M130 560C170 560 220 530 240 500"/><path d="M175 610C190 570 230 550 260 560"/><path d="M60 490C80 530 80 580 95 610"/></g>
  <rect x="65" y="612" width="200" height="16" fill="#b07a4a"/><rect x="20" y="595" width="50" height="33" fill="#52b8b8"/>
  <path d="M282 478C320 490 338 540 336 600L320 630H314C312 570 310 520 282 478Z" fill="#0e2026"/>
  <g stroke="#2a5a60" stroke-width="2"><path d="M295 500H325M302 520H332M306 540H336M310 560H336M312 580H336M314 600H332"/></g>
  <rect x="20" y="635" width="415" height="26" fill="#17bcc6"/>
  <path d="M20 661H437V668H20Z" fill="#0b5560"/>
  <path d="M20 905H245L250 930H0V905Z" fill="#d8eeec"/>
  <path d="M-20 930H225C250 950 260 990 300 1035H-20Z" fill="#0c0c0b"/>
  <ellipse cx="105" cy="1033" rx="138" ry="112" fill="#1e1e1d"/>
  <ellipse cx="105" cy="1025" rx="60" ry="60" fill="#111110"/>
  <ellipse cx="105" cy="1025" rx="42" ry="40" fill="#33312f"/>
  <path d="M340 980L445 975 445 950C450 925 470 920 480 925 495 960 485 1020 470 1035L445 1028 345 1025C332 1010 335 990 340 980Z" fill="#ebe7d6"/>
  <g fill="#f4b01c"><ellipse cx="222" cy="1281" rx="32" ry="10"/><ellipse cx="167" cy="1312" rx="32" ry="11"/><ellipse cx="779" cy="1302" rx="33" ry="10"/></g>
 </g>

 <!-- middle roof + vent -->
 <path d="M890 342C960 336 1060 336 1150 343V380H890Z" fill="#fbf8e4"/>
 <rect x="974" y="329" width="44" height="9" fill="#4a3a30"/>
</g>
</g>
<rect x="597" y="256" width="835" height="470" fill="none" stroke="#a7a9a6" stroke-width=".7"/>

<!-- green block -->
<rect x="888" y="362" width="258" height="257.500" fill="#adc9ad"/>
<text x="931.500" y="481" font-size="80" font-weight="700" fill="#fff" stroke="#fff" stroke-width="4" textLength="168" lengthAdjust="spacingAndGlyphs">KOMBI</text>
<text x="938.500" y="561" font-size="80" font-weight="700" fill="#fff" stroke="#fff" stroke-width="4" textLength="154" lengthAdjust="spacingAndGlyphs">BROS.</text>
<rect x="899" y="407" width="234" height="160" fill="none" stroke="#fff" stroke-width="1.600"/>
<rect x="899" y="407" width="234" height="160" fill="none" stroke="#6a7072" stroke-width="1.600" stroke-dasharray="3 3"/>
<path d="M1015 568V595" stroke="#fff" stroke-width="1.600"/>
<path d="M1015 568V595" stroke="#3e4451" stroke-width="1.600" stroke-dasharray="4 2"/>
<circle cx="1132" cy="566" r="9" fill="#fff"/><circle cx="1132" cy="566" r="6.500" fill="#3e4451"/>
<circle cx="1014.500" cy="604" r="10" fill="#fff"/>
<path d="M1009.500 604a5.500 5.500 0 1 1 5.500 5.500" fill="none" stroke="#3e4451" stroke-width="2.200"/><path d="M1017 605.500v7.500l-5-3.700z" fill="#3e4451"/>

<!-- right side controls -->
<g fill="#dcdee1">
 <circle cx="1471.500" cy="444.500" r="1.400"/><circle cx="1469" cy="449" r="1.400"/><circle cx="1474" cy="449" r="1.400"/><circle cx="1466.500" cy="453.500" r="1.400"/><circle cx="1471.500" cy="453.500" r="1.400"/><circle cx="1476.500" cy="453.500" r="1.400"/><circle cx="1464" cy="458" r="1.400"/><circle cx="1469" cy="458" r="1.400"/><circle cx="1474" cy="458" r="1.400"/><circle cx="1479" cy="458" r="1.400"/><circle cx="1461.500" cy="460" r="1.400"/><circle cx="1481.500" cy="460" r="1.400"/>
 <circle cx="1471.500" cy="535.500" r="1.400"/><circle cx="1469" cy="531" r="1.400"/><circle cx="1474" cy="531" r="1.400"/><circle cx="1466.500" cy="526.500" r="1.400"/><circle cx="1471.500" cy="526.500" r="1.400"/><circle cx="1476.500" cy="526.500" r="1.400"/><circle cx="1464" cy="522" r="1.400"/><circle cx="1469" cy="522" r="1.400"/><circle cx="1474" cy="522" r="1.400"/><circle cx="1479" cy="522" r="1.400"/><circle cx="1461.500" cy="520" r="1.400"/><circle cx="1481.500" cy="520" r="1.400"/>
</g>
<text x="1465" y="498" font-size="31" fill="#a6aab1" textLength="13" lengthAdjust="spacingAndGlyphs">1</text>
<path d="M1473 567h-12v16h4" fill="none" stroke="#aeb1b7" stroke-width="2.400"/>
<rect x="1470" y="574" width="12" height="16" fill="none" stroke="#aeb1b7" stroke-width="2.400"/>
<g fill="none" stroke="#dcdee1" stroke-width="2"><path d="M1464 623.500h17M1468.500 623v-3.500h8v3.500"/><path d="M1465.500 624v14.500h14V624M1470 627v9M1475 627v9"/></g>

<!-- add page -->
<rect x="598" y="743" width="833" height="52" rx="5" fill="#ebecee" stroke="#d2d4d8" stroke-width="2"/>
<text x="941" y="776" font-size="18" fill="#4a505c" textLength="146" lengthAdjust="spacingAndGlyphs">+ Add a new page</text>
</svg>
</body></html>
